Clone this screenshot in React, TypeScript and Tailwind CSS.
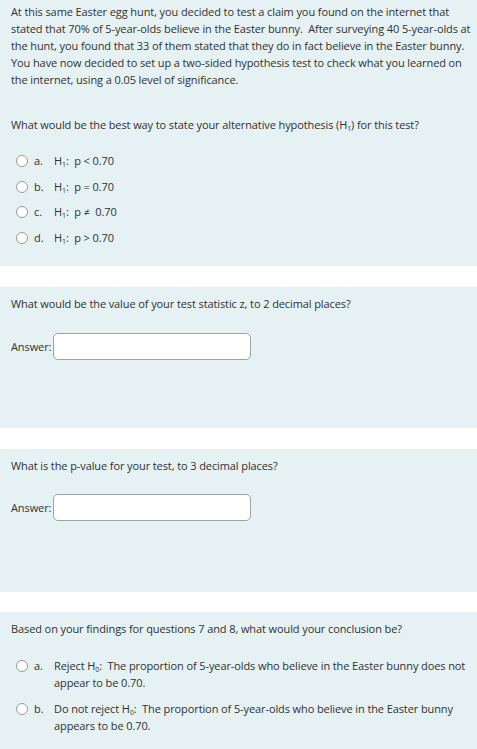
import React from 'react';

const Radio = () => (
  <span className="inline-block w-[12px] h-[12px] rounded-full border border-[#9a9a9a] bg-white shrink-0" />
);

const Sub = ({ c }: { c: string }) => <sub className="text-[7px] align-baseline relative top-[2px]">{c}</sub>;

const Option = ({ letter, children }: { letter: string; children: React.ReactNode }) => (
  <div className="flex items-start">
    <div className="w-[34px] pl-[16px] pt-[3px] flex">
      <Radio />
    </div>
    <span className="w-[20px]">{letter}</span>
    <div className="flex-1">{children}</div>
  </div>
);

const Answer = () => (
  <div className="flex items-center">
    <span>Answer:</span>
    <div className="ml-[2px] w-[198px] h-[27px] rounded-[5px] border border-[#9ca3a8] bg-white" />
  </div>
);

export default function App() {
  return (
    <div
      className="w-[477px] bg-white text-[#2f3133] text-[11px] leading-[17px] tracking-[-0.1px]"
      style={{ fontFamily: '"Open Sans", "Noto Sans", sans-serif' }}
    >
      {/* question 6 */}
      <div className="bg-[#e6f1f4] h-[266px] pl-[11px] pr-[5px] pt-[3px]">
        <p>
          At this same Easter egg hunt, you decided to test a claim you found on the internet that stated that 70% of 5-year-olds believe in the Easter bunny.&nbsp; After surveying 40 5-year-olds at the hunt, you found that 33 of them stated that they do in fact believe in the Easter bunny. You have now decided to set up a two-sided hypothesis test to check what you learned on the internet, using a 0.05 level of significance.
        </p>
        <p className="mt-[28px]">
          What would be the best way to state your alternative hypothesis (H<Sub c="1" />) for this test?
        </p>
        <div className="mt-[19px] -ml-[11px] flex flex-col gap-[8.5px]">
          <Option letter="a.">H<Sub c="1" />:&nbsp; p &lt; 0.70</Option>
          <Option letter="b.">H<Sub c="1" />:&nbsp; p = 0.70</Option>
          <Option letter="c.">H<Sub c="1" />:&nbsp; p ≠&nbsp; 0.70</Option>
          <Option letter="d.">H<Sub c="1" />:&nbsp; p &gt; 0.70</Option>
        </div>
      </div>

      {/* question 7 */}
      <div className="bg-[#e6f1f4] h-[141px] mt-[21px] px-[11px] pt-[8px]">
        <p>What would be the value of your test statistic z, to 2 decimal places?</p>
        <div className="mt-[21px]">
          <Answer />
        </div>
      </div>

      {/* question 8 */}
      <div className="bg-[#e6f1f4] h-[143px] mt-[21px] px-[11px] pt-[8px]">
        <p>What is the p-value for your test, to 3 decimal places?</p>
        <div className="mt-[20px]">
          <Answer />
        </div>
      </div>

      {/* question 9 */}
      <div className="bg-[#e6f1f4] h-[140px] mt-[20px] px-[11px] pt-[8px]">
        <p>Based on your findings for questions 7 and 8, what would your conclusion be?</p>
        <div className="mt-[20px] -mx-[11px] flex flex-col gap-[9px] pr-[8px]">
          <Option letter="a.">
            Reject H<Sub c="0" />:&nbsp; The proportion of 5-year-olds who believe in the Easter bunny does not appear to be 0.70.
          </Option>
          <Option letter="b.">
            Do not reject H<Sub c="0" />:&nbsp; The proportion of 5-year-olds who believe in the Easter bunny appears to be 0.70.
          </Option>
        </div>
      </div>
    </div>
  );
}
